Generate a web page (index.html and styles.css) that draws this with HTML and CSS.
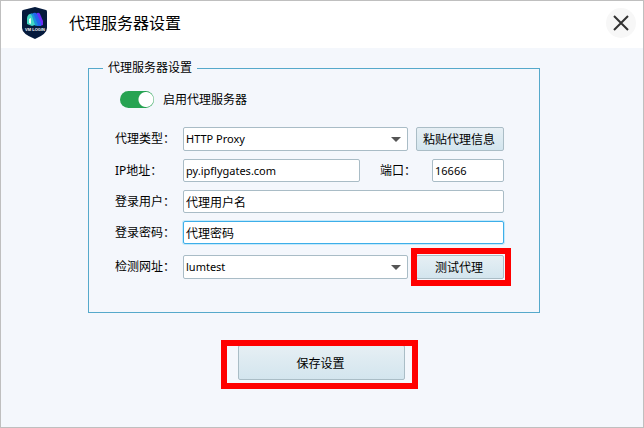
FILE: index.html
```html
<!DOCTYPE html>
<html lang="zh-CN">
<head>
    <meta charset="UTF-8">
    <meta name="viewport" content="width=device-width, initial-scale=1.0">
    <title>代理服务器设置</title>
    <link rel="stylesheet" href="styles.css">
</head>
<body>
<header class="title-bar">
    <svg class="logo" viewBox="0 0 26 32" aria-hidden="true">
        <path d="M13 0 L24 3 Q25 3 25 5 V21 Q25 27 13 32 Q0 27 0 21 V5 Q0 3 1 3 Z" fill="#051a3c"/>
        <path d="M15 6 Q17 5 18 7 L21 14 V18 L18 19 L14 8 Z" fill="#6a2df5"/>
        <path d="M11 6 Q14 5 15 7 L19 16 V19 H15 L11 8 Z" fill="#2463ef"/>
        <path d="M8 7 Q11 5 12 8 L16 18 L14 19 L11 17 L8 9 Z" fill="#1a93d8"/>
        <path d="M5 17 V11 Q6 7 8 7 Q9 7 10 9 L13 18 L10 19 Z" fill="#41d8c4"/>
        <path d="M7 12 L9 11 V17 L7 16 Z" fill="#e8fffb"/>
        <text x="13" y="24" text-anchor="middle" class="logo-text">VM LOGIN</text>
    </svg>
    <h1>代理服务器设置</h1>
    <button type="button" class="close" aria-label="关闭">
        <svg viewBox="0 0 30 30"><path d="M8 8 L22 22 M22 8 L8 22" fill="none" stroke="#333" stroke-width="2"/></svg>
    </button>
</header>

<form class="proxy-form">
    <fieldset>
        <legend>代理服务器设置</legend>
        <label class="switch">
            <input type="checkbox" checked>
            启用代理服务器
        </label>
        <div class="row">
            <label class="name" for="proxy_type">代理类型：</label>
            <div class="select">
                <select id="proxy_type"><option>HTTP Proxy</option></select>
            </div>
            <button type="button" class="btn side">粘贴代理信息</button>
        </div>
        <div class="row">
            <label class="name" for="ip">IP地址：</label>
            <input type="text" id="ip" class="latin" value="py.ipflygates.com">
            <label class="port-name" for="port">端口：</label>
            <input type="text" id="port" class="latin port" value="16666">
        </div>
        <div class="row">
            <label class="name" for="user">登录用户：</label>
            <input type="text" id="user" value="代理用户名">
        </div>
        <div class="row">
            <label class="name" for="password">登录密码：</label>
            <input type="text" id="password" class="active" value="代理密码">
        </div>
        <div class="row check">
            <label class="name" for="check_url">检测网址：</label>
            <div class="select">
                <select id="check_url"><option>lumtest</option></select>
            </div>
            <div class="marked side">
                <button type="button" class="btn">测试代理</button>
            </div>
        </div>
    </fieldset>
    <div class="actions">
        <div class="marked save">
            <button type="submit" class="btn">保存设置</button>
        </div>
    </div>
</form>
</body>
</html>
```

FILE: styles.css
```css
* {
    box-sizing: border-box;
}

body {
    margin: 0;
    min-height: 100vh;
    border: 1px solid #bfbfbf;
    background: #f4f7fc;
    color: #000;
    font: 12px/16px "Noto Sans", "Noto Sans CJK SC", sans-serif;
}

button, input, select {
    font: inherit;
    color: inherit;
}

/* title bar */
.title-bar {
    display: flex;
    align-items: center;
    height: 47px;
    padding: 0 7px 3px 21px;
    background: #fff;
}

.logo {
    width: 26px;
    height: 32px;
}

.logo-text {
    font: bold 4px "Liberation Sans", sans-serif;
    fill: #fff;
}

h1 {
    flex: 1;
    margin: 0 0 0 21px;
    font-size: 16px;
    font-weight: normal;
    line-height: 24px;
}

.close {
    width: 30px;
    height: 30px;
    padding: 0;
    border: none;
    border-radius: 50%;
    background: #f7f7f7;
}

.close svg {
    display: block;
}

/* form */
.proxy-form {
    padding: 12px 103px 0 87px;
}

fieldset {
    min-width: 0;
    margin: 0;
    padding: 15px 35px 33px 26px;
    border: 1px solid #55a9cb;
}

legend {
    margin-left: -12px;
    padding: 0 5px;
}

.switch {
    display: flex;
    align-items: center;
    gap: 9px;
    height: 17px;
    margin: 0 0 19px 5px;
}

.switch input {
    appearance: none;
    width: 34px;
    height: 17px;
    margin: 0;
    border-radius: 9px;
    background: radial-gradient(circle at 26px 50%, #fff 7px, transparent 8px) #27a352;
}

.row {
    display: flex;
    align-items: center;
    margin-bottom: 8px;
}

.row.check {
    margin: 11px 0 0;
}

.name {
    flex: none;
    width: 68px;
}

.port-name {
    flex: none;
    width: 52px;
    margin-left: 20px;
}

input[type="text"] {
    flex: 1;
    min-width: 0;
    height: 23px;
    padding: 0 2px;
    border: 1px solid #a9bcc6;
    border-radius: 2px;
    background: #fff;
    outline: none;
}

input.latin, select {
    font-size: 11px;
}

input[type="text"].port {
    flex: none;
    width: 72px;
}

input[type="text"].active {
    border-color: #3daee9;
    box-shadow: 0 0 0 1px #c5e9fa;
}

.select {
    position: relative;
    flex: 1;
}

.select::after {
    content: "";
    position: absolute;
    top: 10px;
    right: 7px;
    border: 5px solid transparent;
    border-top-color: #555;
    border-bottom: none;
    pointer-events: none;
}

select {
    appearance: none;
    display: block;
    width: 100%;
    height: 24px;
    padding: 0 2px;
    border: 1px solid #a9bcc6;
    border-radius: 2px;
    background: #fff;
}

.btn {
    display: block;
    width: 100%;
    height: 24px;
    padding: 2px 2px 0 0;
    border: 1px solid #aabdc6;
    border-radius: 2px;
    background: linear-gradient(#e6eff4, #d3e5ee);
}

.side {
    flex: none;
    width: 88px;
    margin-left: 8px;
}

/* red frame over the button to press */
.marked {
    position: relative;
}

.marked::after {
    content: "";
    position: absolute;
    inset: -7px -7px -7px -5px;
    border: 6px solid #f00;
    pointer-events: none;
}

.actions {
    display: flex;
    justify-content: center;
    margin-top: 32px;
    padding-left: 15px;
}

.save {
    width: 167px;
}

.save .btn {
    height: 35px;
}

.save::after {
    inset: -5px -13px -9px -17px;
}
```
